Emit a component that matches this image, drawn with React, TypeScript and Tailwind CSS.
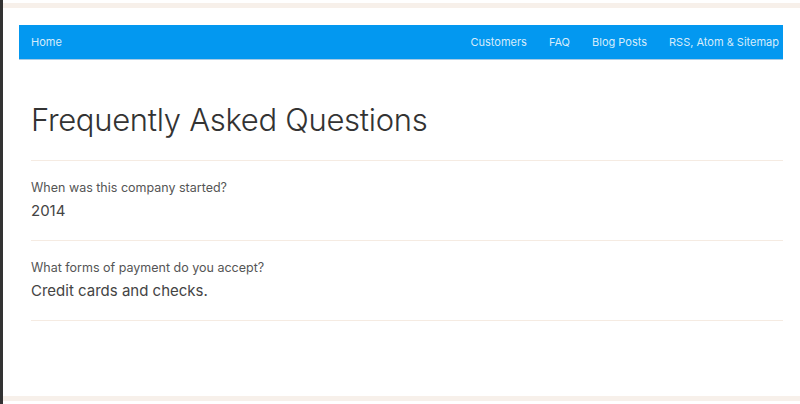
const links = ["Customers", "FAQ", "Blog Posts", "RSS, Atom & Sitemap"];

const faqs = [
  { q: "When was this company started?", a: "2014" },
  { q: "What forms of payment do you accept?", a: "Credit cards and checks." },
];

export default function App() {
  return (
    <div className="flex h-[404px] w-[800px] bg-white font-['Inter',sans-serif]">
      <div className="w-[3px] bg-[#333]" />
      <div className="flex flex-1 flex-col">
        <div className="mt-[3px] h-[5px] bg-[#f7f0ea]" />

        {/* nav */}
        <nav className="ml-[16px] mr-[17px] mt-[17px] flex h-[35px] items-center justify-between border-b border-[#a9cbe4] bg-[#0398f0] pl-[12px] pr-[4px] text-[11px] text-[#d6ecfb]">
          <a>Home</a>
          <div className="flex gap-[22px]">
            {links.map((l) => (
              <a key={l}>{l}</a>
            ))}
          </div>
        </nav>

        <main className="ml-[28px] mr-[17px]">
          <h1 className="mt-[41px] mb-[21px] text-[31px] leading-[38px] font-light tracking-[-0.3px] text-[#333]">
            Frequently Asked Questions
          </h1>
          {faqs.map((f) => (
            <div key={f.q} className="border-t border-[#f5ebe2] pt-[19px] pb-[19px]">
              <div className="text-[12.5px] leading-[16px] text-[#555]">{f.q}</div>
              <div className="mt-[5px] text-[15px] leading-[20px] text-[#444]">{f.a}</div>
            </div>
          ))}
          <div className="border-t border-[#f5ebe2]" />
        </main>

        <div className="flex-1" />
        <div className="mb-[3px] h-[5px] bg-[#f7f0ea]" />
      </div>
    </div>
  );
}
